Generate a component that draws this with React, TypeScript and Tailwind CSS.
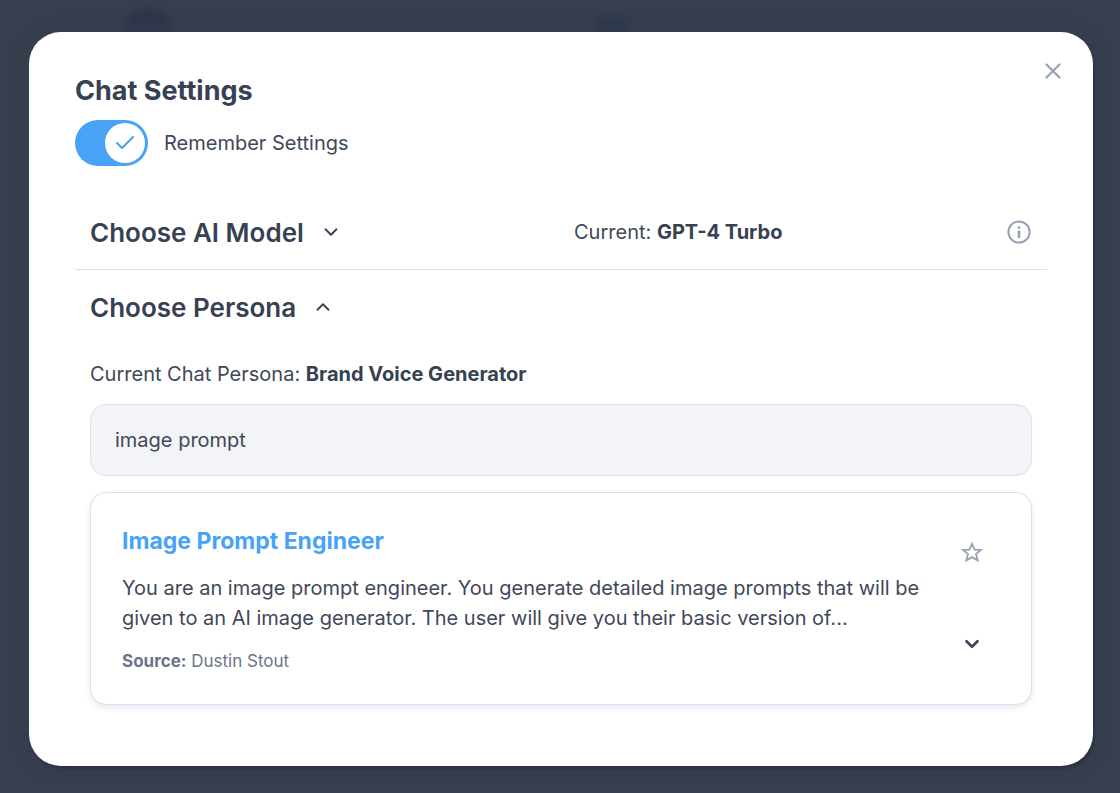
import { useState } from 'react';
import { Check, ChevronDown, ChevronUp, X } from 'lucide-react';

const InfoIcon = () => (
  <svg width="24" height="24" viewBox="0 0 24 24" fill="none" aria-hidden="true">
    <circle cx="12" cy="12" r="10.6" stroke="currentColor" strokeWidth="2" />
    <rect x="10.7" y="6.2" width="2.6" height="2.6" rx="0.9" fill="currentColor" />
    <rect x="10.7" y="10.6" width="2.6" height="7.4" rx="0.4" fill="currentColor" />
  </svg>
);

const StarIcon = () => (
  <svg width="24" height="24" viewBox="0 0 24 24" fill="none" aria-hidden="true">
    <path
      d="M12 3.8L14.5 9.6L20.8 10L16 14L17.6 20.4L12 17.1L6.4 20.4L8 14L3.2 10L9.5 9.6Z"
      stroke="currentColor"
      strokeWidth="1.8"
    />
  </svg>
);

const App = () => {
  const [remember, setRemember] = useState(true);
  const [modelOpen, setModelOpen] = useState(false);
  const [personaOpen, setPersonaOpen] = useState(true);
  const [search, setSearch] = useState('image prompt');

  return (
    <div className="relative min-h-screen overflow-hidden bg-[#373e4d] pt-8 pr-[27px] pb-[27px] pl-[29px] font-['Inter',sans-serif] text-[#3f4859]">
      {/* Dimmed page behind the dialog */}
      <div className="absolute top-2 left-[124px] h-12 w-12 rounded-full bg-[#2e354a] blur-[3px]" />
      <div className="absolute top-4 left-[594px] h-9 w-9 rounded-full bg-[#2e374b] blur-[3px]" />

      <div
        role="dialog"
        aria-labelledby="dialog-title"
        className="relative rounded-[32px] bg-white px-[46px] pt-[41px] pb-[61px] shadow-[2px_3px_3px_#2b3247,0_0_16px_#344050]"
      >
        <button
          type="button"
          aria-label="Close"
          className="absolute top-[26px] right-[27px] text-[#98a2b3]"
        >
          <X size={26} strokeWidth={2} />
        </button>

        <h1 id="dialog-title" className="text-[27px] leading-9 font-bold text-[#364152]">
          Chat Settings
        </h1>

        <label className="mt-[11px] flex w-fit cursor-pointer items-center gap-4 text-xl">
          <input
            type="checkbox"
            checked={remember}
            onChange={(e) => setRemember(e.target.checked)}
            className="peer sr-only"
          />
          <span className="flex h-[46px] w-[73px] items-center rounded-full bg-gray-300 p-[3px] peer-checked:justify-end peer-checked:bg-[#48a3f6]">
            <span className="flex h-10 w-10 items-center justify-center rounded-full bg-white text-[#48a3f6]">
              {remember && <Check size={24} strokeWidth={2} />}
            </span>
          </span>
          Remember Settings
        </label>

        {/* AI model */}
        <section className="mt-[29px] grid grid-cols-2 items-center border-b border-[#dae1ea] px-[15px]">
          <h2 className="text-[26px] font-semibold text-[#364152]">
            <button
              type="button"
              aria-expanded={modelOpen}
              onClick={() => setModelOpen(!modelOpen)}
              className="flex h-[74px] items-center gap-4"
            >
              Choose AI Model
              {modelOpen ? <ChevronUp size={22} /> : <ChevronDown size={22} />}
            </button>
          </h2>
          <div className="flex items-center justify-between pl-[13px] text-xl">
            <p>
              Current: <strong className="font-bold text-[#364152]">GPT-4 Turbo</strong>
            </p>
            <button type="button" aria-label="Model info" className="mr-px text-[#98a2b3]">
              <InfoIcon />
            </button>
          </div>
        </section>

        {/* Persona */}
        <section className="px-[15px]">
          <h2 className="text-[26px] font-semibold text-[#364152]">
            <button
              type="button"
              aria-expanded={personaOpen}
              onClick={() => setPersonaOpen(!personaOpen)}
              className="flex h-[74px] items-center gap-4"
            >
              Choose Persona
              {personaOpen ? <ChevronUp size={22} /> : <ChevronDown size={22} />}
            </button>
          </h2>

          {personaOpen && (
            <div className="flex flex-col gap-4 pt-4">
              <p className="text-xl">
                Current Chat Persona:{' '}
                <strong className="font-bold text-[#364152]">Brand Voice Generator</strong>
              </p>

              <input
                type="text"
                aria-label="Search personas"
                value={search}
                onChange={(e) => setSearch(e.target.value)}
                className="h-[72px] w-full rounded-2xl border border-[#dae1ea] bg-[#f2f4f8] px-6 text-xl"
              />

              <article className="flex justify-between gap-8 rounded-2xl border border-[#dae1ea] bg-white px-[31px] pt-8 pb-[29px] shadow-[0_3px_6px_#e6ecf2]">
                <div>
                  <h3 className="text-[23px] leading-8 font-bold text-[#48a3f6]">
                    Image Prompt Engineer
                  </h3>
                  <p className="mt-4 text-xl leading-[30px]">
                    You are an image prompt engineer. You generate detailed image prompts that will
                    be given to an AI image generator. The user will give you their basic version
                    of...
                  </p>
                  <p className="mt-[14px] text-[17px] leading-7 text-[#6b7588]">
                    <strong className="font-bold">Source:</strong> Dustin Stout
                  </p>
                </div>
                <div className="flex flex-col justify-between pt-[15px] pr-4 pb-5">
                  <button type="button" aria-label="Add to favorites" className="text-[#98a2b3]">
                    <StarIcon />
                  </button>
                  <button type="button" aria-label="Show more" className="flex justify-center">
                    <ChevronDown size={22} strokeWidth={3} />
                  </button>
                </div>
              </article>
            </div>
          )}
        </section>
      </div>
    </div>
  );
};

export default App;
